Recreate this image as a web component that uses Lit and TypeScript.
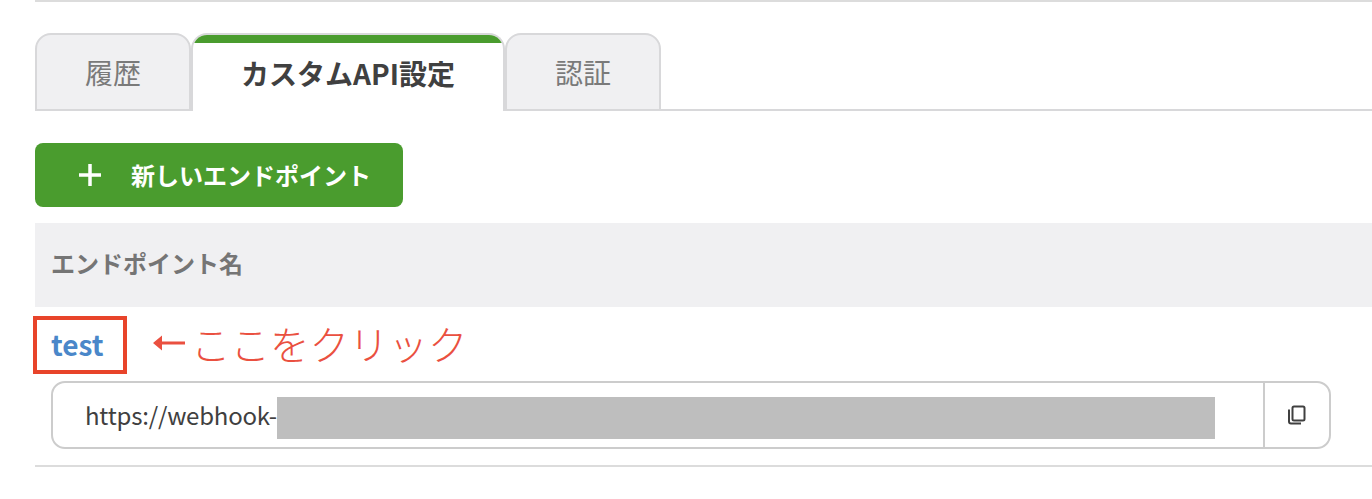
import { LitElement, html, css } from "lit";
import { customElement } from "lit/decorators.js";

@customElement("app-root")
export class AppRoot extends LitElement {
  static styles = css`
    :host {
      display: block;
      width: 1372px;
      height: 499px;
      overflow: hidden;
      background: #fff;
      font-family: "Noto Sans CJK JP", "Noto Sans", sans-serif;
      color: #404040;
      box-sizing: border-box;
      padding-left: 35px;
    }
    * { box-sizing: border-box; }
    .topline { height: 2px; background: #dcdcdc; }
    .tabs {
      display: flex;
      margin-top: 31px;
      height: 78px;
      border-bottom: 2px solid #d8d8da;
    }
    .tab {
      width: 156px;
      height: 78px;
      background: #f0f0f2;
      border: 2px solid #d8d8da;
      border-radius: 16px 16px 0 0;
      color: #7a7a7a;
      font-size: 28px;
      line-height: 1;
      display: flex;
      align-items: center;
      justify-content: center;
    }
    .tab.active {
      width: 314px;
      background: #fff;
      color: #404040;
      font-weight: 700;
      border-bottom: none;
      overflow: hidden;
      position: relative;
    }
    .tab.active::before {
      content: "";
      position: absolute;
      left: 0;
      right: 0;
      top: 0;
      height: 8px;
      background: #4a9c2e;
    }
    .btn {
      margin-top: 32px;
      width: 368px;
      height: 64px;
      border-radius: 8px;
      background: #4a9c2e;
      color: #fff;
      font-size: 24px;
      font-weight: 700;
      display: flex;
      align-items: center;
      padding-left: 43px;
      gap: 29px;
      line-height: 1;
    }
    .btn svg { display: block; }
    .thead {
      margin-top: 16px;
      height: 84px;
      background: #f0f0f2;
      color: #757575;
      font-size: 24px;
      font-weight: 700;
      display: flex;
      align-items: center;
      padding: 0 0 6px 16px;
    }
    .row {
      height: 160px;
      border-bottom: 2px solid #dcdcdc;
      padding: 9px 41px 0 16px;
    }
    .name {
      display: flex;
      align-items: center;
      height: 58px;
      position: relative;
      padding-bottom: 2px;
    }
    .link {
      color: #4a87c9;
      font-size: 28px;
      font-weight: 700;
      line-height: 1;
    }
    .mark {
      position: absolute;
      left: -18px;
      top: 0;
      width: 94px;
      height: 58px;
      border: 4px solid #e8442a;
    }
    .note {
      position: absolute;
      left: 102px;
      top: 3px;
      display: flex;
      align-items: center;
      gap: 6px;
      color: #ea5040;
      font-size: 39.5px;
      font-weight: 300;
      line-height: 48px;
      white-space: nowrap;
    }
    .note svg { display: block; flex: none; }
    .url {
      margin-top: 7px;
      height: 68px;
      border: 2px solid #cccccc;
      border-radius: 14px;
      display: flex;
      align-items: center;
    }
    .value {
      flex: 1;
      height: 100%;
      display: flex;
      align-items: center;
      padding-left: 32px;
      font-size: 24px;
      line-height: 1;
      color: #404040;
    }
    .text { letter-spacing: -0.2px; }
    .redact {
      width: 938px;
      height: 42px;
      margin-top: 6px;
      background: #bebebe;
      flex: none;
    }
    .copy {
      width: 66px;
      height: 100%;
      border-left: 2px solid #cccccc;
      display: flex;
      align-items: center;
      justify-content: center;
    }
  `;

  render() {
    return html`
      <div class="topline"></div>
      <div class="tabs">
        <div class="tab">履歴</div>
        <div class="tab active">カスタムAPI設定</div>
        <div class="tab">認証</div>
      </div>
      <div class="btn">
        <svg width="24" height="24" viewBox="0 0 24 24" fill="none" stroke="#fff" stroke-width="3.5">
          <path d="M12 1v22M1 12h22"></path>
        </svg>
        <span>新しいエンドポイント</span>
      </div>
      <div class="thead">エンドポイント名</div>
      <div class="row">
        <div class="name">
          <span class="link">test</span>
          <div class="mark"></div>
          <div class="note">
            <svg width="32" height="16" viewBox="0 0 32 16" fill="#ea5040">
              <path d="M0 8 9 0.5V6.5H32V9.5H9V15.5Z"></path>
            </svg>
            <span>ここをクリック</span>
          </div>
        </div>
        <div class="url">
          <div class="value"><span class="text">https://webhook-</span><div class="redact"></div></div>
          <div class="copy">
            <svg width="20" height="20" viewBox="0 0 20 20" fill="none" stroke="#404040" stroke-width="2">
              <rect x="5.5" y="1.5" width="12" height="14" rx="1.5"></rect>
              <path d="M2 4.5v12a2 2 0 0 0 2 2h10"></path>
            </svg>
          </div>
        </div>
      </div>
    `;
  }
}
